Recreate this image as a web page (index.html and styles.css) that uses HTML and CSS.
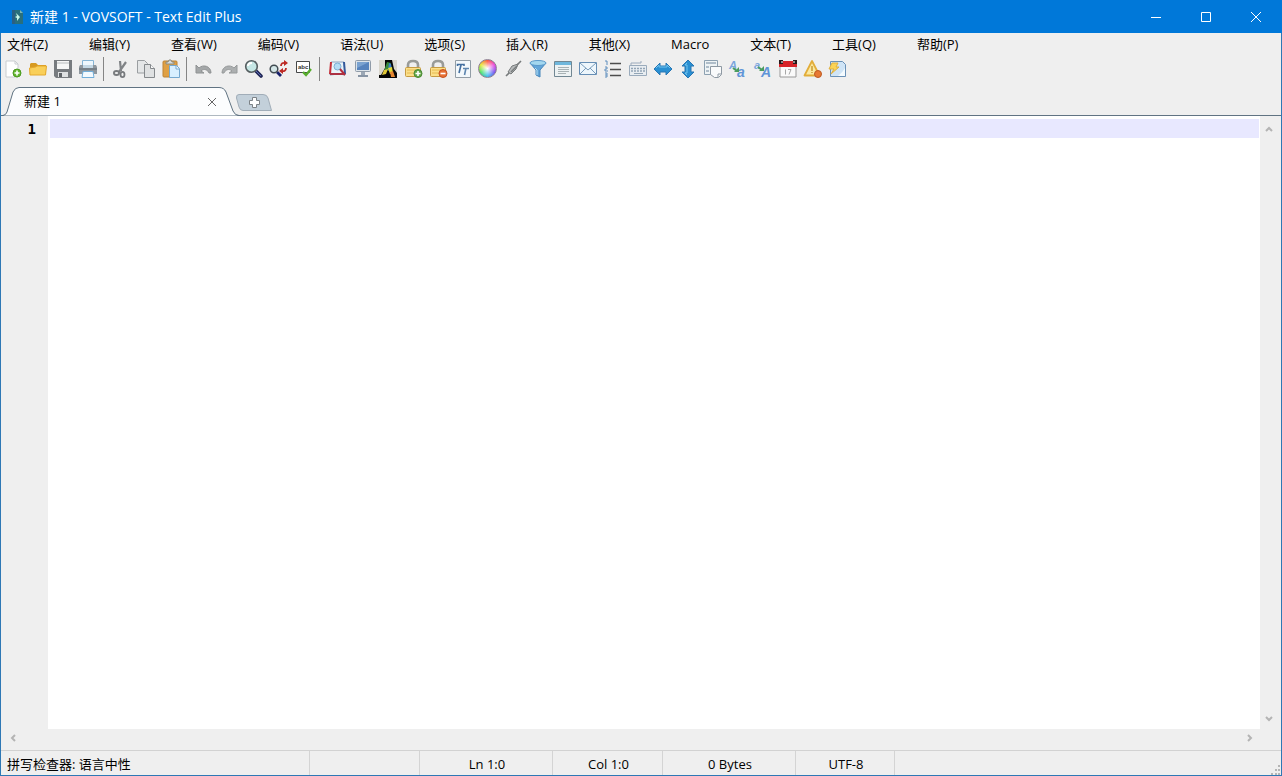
FILE: index.html
```html
<!DOCTYPE html>
<html lang="zh-CN">
<head>
<meta charset="utf-8">
<title>新建 1 - VOVSOFT - Text Edit Plus</title>
<link rel="stylesheet" href="styles.css">
</head>
<body>
<div class="window">
  <header class="titlebar">
    <svg class="app-icon" viewBox="0 0 12 16"><path d="M1 1h8l3 3v11H1z" fill="#286f7c"/><path d="M1 1h3v14H1z" fill="#2b5f83"/><path d="M9 1v3h3z" fill="#7bb7b4"/><path d="M5 4l4 4-3 4V9L4 8l2-1z" fill="#c9f5e6"/></svg>
    <h1 class="title">新建 1 - VOVSOFT - Text Edit Plus</h1>
    <div class="window-controls">
      <button class="win-btn" aria-label="最小化"><svg viewBox="0 0 12 12"><path d="M1 6.500h10"/></svg></button>
      <button class="win-btn" aria-label="最大化"><svg viewBox="0 0 12 12"><path d="M1.500 1.500h9v9h-9z"/></svg></button>
      <button class="win-btn" aria-label="关闭"><svg viewBox="0 0 12 12"><path d="M1 1l10 10M11 1L1 11"/></svg></button>
    </div>
  </header>

  <nav class="menubar">
    <button>文件(Z)</button><button>编辑(Y)</button><button>查看(W)</button><button>编码(V)</button><button>语法(U)</button><button>选项(S)</button><button>插入(R)</button><button>其他(X)</button><button>Macro</button><button>文本(T)</button><button>工具(Q)</button><button>帮助(P)</button>
  </nav>

  <div class="toolbar" role="toolbar">
    <button aria-label="新建"><svg viewBox="0 0 20 20"><path d="M3 2h9l3 3v13H3z" fill="#fff" stroke="#c9cdd0"/><path d="M12 2v3h3" fill="none" stroke="#c9cdd0"/><circle cx="14" cy="14" r="4" fill="#62b52d" stroke="#4c9b20"/><path d="M14 11.500v5M11.500 14h5" stroke="#fff" stroke-width="1.600"/></svg></button>
    <button aria-label="打开"><svg viewBox="0 0 20 20"><path d="M2 16V5l1-1h5l2 2h8v10z" fill="#d79a20"/><path d="M1.500 9l6-1 2-1h9l-1 9H2z" fill="#f9cf59" stroke="#e4a92e"/></svg></button>
    <button aria-label="保存"><svg viewBox="0 0 20 20"><path d="M1 1h18v18H3l-2-2z" fill="#777b7f"/><path d="M4 2h12v8H4z" fill="#f5f6f6"/><path d="M4 4h12" stroke="#b8bcbe"/><path d="M5 13h10v5H5z" fill="#dfe1e2"/><path d="M6 14h3v4H6z" fill="#606468"/></svg></button>
    <button aria-label="打印"><svg viewBox="0 0 20 20"><path d="M4.500 1.500h11V8h-11z" fill="#eef7fd" stroke="#86b5d5"/><path d="M2 6h16l1 2v7H1V8z" fill="#8f979e"/><path d="M5 6h10v3H5z" fill="#c4d8e5"/><path d="M1 10h18" stroke="#5f6870"/><path d="M5 12.500h10l1 6H4z" fill="#f3faff" stroke="#72aed9"/></svg></button>
    <span class="separator"></span>
    <button aria-label="剪切"><svg viewBox="0 0 20 20"><path d="M9 2l1 10M15 3l-7 10" stroke="#808386" stroke-width="2.200"/><ellipse cx="5.500" cy="14" rx="2.600" ry="2" fill="none" stroke="#777a7d" stroke-width="1.800"/><ellipse cx="11.500" cy="15.500" rx="2" ry="2.600" fill="none" stroke="#777a7d" stroke-width="1.800"/></svg></button>
    <button aria-label="复制"><svg viewBox="0 0 20 20"><path d="M1.500 1.500h7l3 3V14h-10z" fill="#e4e6e7" stroke="#9a9ea1"/><path d="M8.500 5.500h6l4 4v9h-10z" fill="#dfe1e2" stroke="#85898c"/><path d="M14.500 5.500v4h4" fill="#f8f8f8" stroke="#85898c"/></svg></button>
    <button aria-label="粘贴"><svg viewBox="0 0 20 20"><rect x="2" y="2" width="14" height="16" rx="1" fill="#dfa044" stroke="#bd8334"/><path d="M5 5V3h2l1-2h2l1 2h2v2z" fill="#d8dbd9" stroke="#8d8979"/><path d="M8.500 6.500h7l3 3v9h-10z" fill="#d8efff" stroke="#75a8cf"/><path d="M15 7v3h3" fill="#fff" stroke="#75a8cf"/></svg></button>
    <span class="separator"></span>
    <button aria-label="撤销"><svg viewBox="0 0 20 20"><path d="M2 6v8h8l-3-2c3-3 7-1 8 2h2C17 7 9 5 5 9z" fill="#a4a7a8" stroke="#8f9293"/></svg></button>
    <button aria-label="重做"><svg viewBox="0 0 20 20"><path d="M18 6v8h-8l3-2c-3-3-7-1-8 2H3C3 7 11 5 15 9z" fill="#acafb0" stroke="#979a9b"/></svg></button>
    <button aria-label="查找"><svg viewBox="0 0 20 20"><path d="M12 12l5 5" stroke="#222858" stroke-width="3.600" stroke-linecap="round"/><path d="M12 12l5 5" stroke="#5b6db4"/><circle cx="7.500" cy="7.500" r="5.800" fill="#c6e7e5" stroke="#555e60" stroke-width="1.600"/><path d="M4 7q0-3 4-3" fill="none" stroke="#fff" stroke-width="2"/></svg></button>
    <button aria-label="替换"><svg viewBox="0 0 20 20"><path d="M8 13l4 4" stroke="#18206b" stroke-width="2.800"/><circle cx="5" cy="10" r="3.800" fill="#d4e6e7" stroke="#414b51" stroke-width="1.500"/><path d="M12 7q0-4 5-3M17 9q0 4-5 3" fill="none" stroke="#bd2924" stroke-width="1.800"/><path d="M15 1l4 3-4 3zM14 9l-4 3 4 3z" fill="#bd2924"/></svg></button>
    <button aria-label="拼写检查"><svg viewBox="0 0 20 20"><path d="M2.500 2.500h13v11h-13z" fill="#fff" stroke="#454748"/><text x="4" y="10" class="glyph-abc">abc</text><path d="M9 13l3 3 5-6" fill="none" stroke="#56ad2d" stroke-width="2.400"/></svg></button>
    <span class="separator wide"></span>
    <button aria-label="预览"><svg viewBox="0 0 20 20"><path d="M3 3h13l1 13-6-1-9 1z" fill="#e9f3f8" stroke="#8aa2c2"/><path d="M3 3L2 15" stroke="#c72e37" stroke-width="2"/><path d="M2 15h14" stroke="#ac3142" stroke-width="2"/><path d="M16 3l1 12" stroke="#33599b" stroke-width="2"/><circle cx="9.500" cy="7.500" r="3.500" fill="#b4dcf5" stroke="#7caed3"/><path d="M12 10l5 6" stroke="#b42e3d" stroke-width="2"/></svg></button>
    <button aria-label="全屏"><svg viewBox="0 0 20 20"><rect x="2.500" y="1.500" width="15" height="11" rx="1" fill="#dce3e9" stroke="#8f9ba8"/><path d="M4 3h12v8H4z" fill="#5683bd"/><path d="M4 3h12L4 9z" fill="#7aa2d0"/><path d="M8 13h4v3H8z" fill="#9ba7b5"/><path d="M5 17h10" stroke="#8794a4" stroke-width="2"/></svg></button>
    <button aria-label="语法颜色"><svg viewBox="0 0 20 20"><path d="M1 1h18v18H1z" fill="#050505"/><path d="M1 1h6v8l-4 7H1z" fill="#d9d6cc"/><path d="M14 1h5v13l-3-4z" fill="#d9d6cc"/><path d="M9 3l4 1-3 7-4 1z" fill="#37893a"/><path d="M11 4l2 1 1 5-4 2z" fill="#3d80c8"/><path d="M10 9l4-1 1 6-3 1z" fill="#e2da36"/><path d="M12 13l3-1 2 6h-4z" fill="#e58631"/><path d="M6 11l4-1-2 5-4 1z" fill="#e2c936"/></svg></button>
    <button aria-label="加密"><svg viewBox="0 0 20 20"><path d="M5 9V6q0-4 5-4t5 4v3" fill="none" stroke="#999b98" stroke-width="2.600"/><rect x="2.500" y="8.500" width="15" height="9" rx="1" fill="#fbdf89" stroke="#c69b42"/><path d="M4 11h9M4 14h7" stroke="#e6b94f"/><circle cx="15" cy="14.500" r="4" fill="#62a846" stroke="#498733"/><path d="M12.500 14.500h5M15 12v5" stroke="#fff" stroke-width="1.600"/></svg></button>
    <button aria-label="解密"><svg viewBox="0 0 20 20"><path d="M5 9V6q0-4 5-4t5 4v3" fill="none" stroke="#999b98" stroke-width="2.600"/><rect x="2.500" y="8.500" width="15" height="9" rx="1" fill="#fbdf89" stroke="#c69b42"/><path d="M4 11h9M4 14h7" stroke="#e6b94f"/><circle cx="15" cy="14.500" r="4" fill="#e77034" stroke="#c65221"/><path d="M12.500 14.500h5" stroke="#fff" stroke-width="1.600"/></svg></button>
    <button aria-label="字体"><svg viewBox="0 0 20 20"><path d="M2.500 1.500h15v17h-15z" fill="#f3f8fb" stroke="#929da6"/><path d="M4.500 7V5.500H11V7M8 6l-2 8" fill="none" stroke="#426e9f" stroke-width="1.600"/><path d="M10 9.500h6M13 9l-1.500 7" fill="none" stroke="#5f87b0" stroke-width="1.600"/></svg></button>
    <button aria-label="颜色"><span class="color-wheel"></span></button>
    <button aria-label="连接"><svg viewBox="0 0 20 20"><path d="M3 17l4-4M13 7l5-5" stroke="#777b7c" stroke-width="1.600"/><path d="M5 13l4-6 6-2-2 5-5 5z" fill="#b7babb" stroke="#777b7c"/><path d="M8 13l6-6" stroke="#777b7c" stroke-width="1.500"/></svg></button>
    <button aria-label="筛选"><svg viewBox="0 0 20 20"><path d="M2 4h16l-6 7v7l-4-2v-5z" fill="#62a5d9" stroke="#4685ba"/><ellipse cx="10" cy="4" rx="8" ry="2.500" fill="#a3d7ef" stroke="#5a99ca"/><path d="M7 9l2 2v5" fill="none" stroke="#b7e2f5"/></svg></button>
    <button aria-label="窗口"><svg viewBox="0 0 20 20"><path d="M1.500 2.500h17v15h-17z" fill="#edf2f3" stroke="#718793"/><path d="M2 3h16v3H2z" fill="#6fb7dc"/><path d="M5 8.500h11M5 10.500h11M5 12.500h11M5 14.500h8" stroke="#a8b2b5"/></svg></button>
    <button aria-label="邮件"><svg viewBox="0 0 20 20"><path d="M1.500 3.500h17v12h-17z" fill="#edf6fc" stroke="#668eb5"/><path d="M2 4l8 7 8-7M2 15l6-6M18 15l-6-6" fill="none" stroke="#789bbb"/></svg></button>
    <button aria-label="行号"><svg viewBox="0 0 20 20"><path d="M7 4.500h11M7 10.500h11M7 16.500h11" stroke="#4d4d4d" stroke-width="1.500"/><path d="M2 2h2v4M2 8h2v2H2v2h3M2 14h2v2H2m2 0v2H2" fill="none" stroke="#5d8dbd"/></svg></button>
    <button aria-label="键盘"><svg viewBox="0 0 20 20"><path d="M3 6V4h10V2" fill="none" stroke="#9baabc"/><path d="M1.500 6.500h17v10h-17z" fill="#e8edf1" stroke="#9aabbc"/><path d="M3 9.500h14M3 12h14" stroke="#92a5b6" stroke-width="1.500" stroke-dasharray="2 1"/><path d="M6 14.500h9" stroke="#92a5b6"/></svg></button>
    <button aria-label="水平翻转"><svg viewBox="0 0 20 20"><path d="M1 10l6-6v3h6V4l6 6-6 6v-3H7v3z" fill="#298fd2" stroke="#2876b3"/><path d="M3 9l3-3v2h8V6l3 3" fill="none" stroke="#70c3ed"/></svg></button>
    <button aria-label="垂直翻转"><svg viewBox="0 0 20 20"><path d="M10 1l6 6h-3v6h3l-6 6-6-6h3V7H4z" fill="#298fd2" stroke="#2876b3"/><path d="M9 4L7 6h2v8H7l2 2" fill="none" stroke="#70c3ed"/></svg></button>
    <button aria-label="复制窗口"><svg viewBox="0 0 20 20"><path d="M1.500 1.500h13v14h-13z" fill="#eef3f5" stroke="#8da1b1"/><path d="M3 4h10M3 8h3M3 12h3" stroke="#9bacba" stroke-width="1.500"/><path d="M7.500 7.500h11v8l-3 3h-4l-4-3z" fill="#f9fafb" stroke="#8e99a3"/><path d="M15 18v-3h3" fill="none" stroke="#8e99a3"/></svg></button>
    <button aria-label="转为小写"><svg viewBox="0 0 20 20"><text x="1" y="10" class="glyph-small">A</text><text x="9" y="18" class="glyph-large">a</text><path d="M5 9l4 3" stroke="#4b9d60" stroke-width="2"/><path d="M11 8v5H6z" fill="#4b9d60"/></svg></button>
    <button aria-label="转为大写"><svg viewBox="0 0 20 20"><text x="1" y="10" class="glyph-small">a</text><text x="8" y="18" class="glyph-large">A</text><path d="M5 8l4 3" stroke="#4b9d60" stroke-width="2"/><path d="M11 7v5H6z" fill="#4b9d60"/></svg></button>
    <button aria-label="日期"><svg viewBox="0 0 20 20"><path d="M2 3h16v15H2z" fill="#fafafa" stroke="#999"/><path d="M1 2h18v6H1z" fill="#d62429"/><path d="M1 1h4v4H1zM15 1h4v4h-4z" fill="#27191a"/><path d="M4 2v2M16 2v2" stroke="#fff"/><path d="M7.500 10.500v5M10 10.500h3l-2 5" fill="none" stroke="#a7a7a7"/></svg></button>
    <button aria-label="警告"><svg viewBox="0 0 20 20"><path d="M9 2L1.500 16.500h15z" fill="#fce9a0" stroke="#e2ad39" stroke-width="1.800" stroke-linejoin="round"/><path d="M9 7v5M9 13v1" stroke="#c69a35" stroke-width="1.500"/><circle cx="15" cy="15" r="3.500" fill="#e87932" stroke="#bd5923"/></svg></button>
    <button aria-label="运行"><svg viewBox="0 0 20 20"><path d="M2.500 2.500h12l3 3v12h-15z" fill="#cfe4f6" stroke="#6a91b7"/><path d="M10 17q5-4 7-8v8z" fill="#f4fbff"/><path d="M4 4h6L8 8h3L3 15l3-5H1z" fill="#fbd455" stroke="#e0b03f"/></svg></button>
  </div>

  <div class="tabs">
    <div class="tab">
      <svg class="tab-shape" viewBox="0 0 236 29"><path d="M0 28.500Q3 28 4 25L10 5Q12 .5 16 .5H216Q221 .5 223 5L230 24Q232 28.500 236 28.500" fill="#fcfdfe" stroke="#607382"/></svg>
      <button class="tab-name">新建 1</button>
      <button class="tab-close" aria-label="关闭标签"><svg viewBox="0 0 10 10"><path d="M1 1l8 8M9 1L1 9" stroke="#666"/></svg></button>
    </div>
    <button class="tab-add" aria-label="新标签"><svg viewBox="0 0 36 18"><path d="M3 .5H27Q31 .5 32 4L35.500 16.500H7Q4 16.500 3 13L.5 4Q0 .5 3 .5z" fill="#c3d0da" stroke="#a1adb8"/><path d="M16.500 3.500h4v3h3v4h-3v3h-4v-3h-3v-4h3z" fill="#fff" stroke="#7c8287"/></svg></button>
  </div>

  <main class="editor">
    <div class="gutter">1</div>
    <textarea class="document" aria-label="文档" spellcheck="false"></textarea>
    <div class="scroll-y"><button aria-label="向上"><svg viewBox="0 0 10 10"><path d="M2 7l3-3 3 3"/></svg></button><button aria-label="向下"><svg viewBox="0 0 10 10"><path d="M2 3l3 3 3-3"/></svg></button></div>
    <div class="scroll-x"><button aria-label="向左"><svg viewBox="0 0 10 10"><path d="M7 2L4 5l3 3"/></svg></button><button aria-label="向右"><svg viewBox="0 0 10 10"><path d="M3 2l3 3-3 3"/></svg></button></div>
  </main>

  <footer class="statusbar">
    <span class="status-language">拼写检查器: 语言中性</span><span></span><span>Ln 1:0</span><span>Col 1:0</span><span>0 Bytes</span><span>UTF-8</span>
    <svg class="grip" viewBox="0 0 10 10"><path d="M7 0h2v2H7zM7 4h2v2H7zM7 8h2v2H7zM4 4h2v2H4zM4 8h2v2H4zM0 8h2v2H0z" fill="#b5b5b5"/></svg>
  </footer>
</div>
</body>
</html>
```
FILE: styles.css
```css
* { box-sizing: border-box; }

body {
  margin: 0;
  font: 13px/20px "Open Sans", "Noto Sans CJK SC", sans-serif;
  color: #000;
}

button {
  margin: 0;
  padding: 0;
  border: 0;
  background: none;
  font: inherit;
  color: inherit;
}

svg { display: block; }

.window {
  display: flex;
  flex-direction: column;
  height: 100vh;
  border: 1px solid #2e78b5;
  border-top: 0;
  background: #efefef;
}

.titlebar {
  display: flex;
  align-items: center;
  height: 33px;
  margin: 0 -1px;
  padding-left: 11px;
  background: #0078d9;
  color: #fff;
}

.app-icon { width: 12px; height: 16px; }

.title {
  flex: 1;
  margin: 0 0 0 7px;
  font-size: 14px;
  font-weight: 400;
}

.window-controls { display: flex; padding-right: 1px; }

.win-btn {
  display: grid;
  place-items: center;
  width: 50px;
  height: 33px;
}

.win-btn svg {
  width: 12px;
  height: 12px;
  fill: none;
  stroke: #fff;
}

.menubar {
  display: flex;
  align-items: flex-start;
  gap: 41px;
  height: 23px;
  padding: 1px 0 0 6px;
}

.toolbar {
  display: flex;
  align-items: center;
  height: 27px;
  padding-bottom: 2px;
}

.toolbar button {
  display: grid;
  justify-content: start;
  align-items: center;
  width: 25px;
  height: 24px;
  padding-left: 2px;
}

.toolbar svg { width: 20px; height: 20px; fill: none; }

.separator {
  width: 8px;
  height: 24px;
  background: linear-gradient(#858585, #858585) 2px 0 / 1px 100% no-repeat;
}

.separator.wide { width: 9px; }

.glyph-abc { font: bold 6px "Liberation Sans", sans-serif; fill: #333; }
.glyph-small { font: italic bold 11px "Liberation Sans", sans-serif; fill: #7ba5dd; }
.glyph-large { font: italic bold 14px "Liberation Sans", sans-serif; fill: #6095d8; }

.color-wheel {
  width: 19px;
  height: 19px;
  border: 1px solid #8f7f92;
  border-radius: 50%;
  background: radial-gradient(#fff, #fff0 70%), conic-gradient(#ff4f35, #e940dc, #704ff0, #36bbed, #43df63, #e8e62e, #ff4f35);
}

.tabs {
  display: flex;
  align-items: flex-end;
  height: 33px;
  padding-left: 2px;
  background: linear-gradient(#607382, #607382) 0 100% / 100% 1px no-repeat;
}

.tab {
  display: grid;
  grid-template-columns: 1fr 32px;
  align-items: center;
  width: 236px;
  height: 29px;
}

.tab-shape {
  grid-area: 1 / 1 / 2 / 3;
  width: 236px;
  height: 29px;
}

.tab-name { grid-area: 1 / 1; padding: 0 0 2px 21px; text-align: left; }
.tab-close { grid-area: 1 / 2; width: 10px; height: 10px; }
.tab-add { width: 36px; height: 18px; margin: 0 0 4px -3px; }

.editor {
  display: grid;
  grid-template: 1fr 21px / 47px 1fr 21px;
  flex: 1;
  min-height: 0;
}

.gutter {
  padding: 3px 12px 0 0;
  font: bold 14px/20px "DejaVu Sans Mono", monospace;
  text-align: right;
}

.document {
  width: 100%;
  height: 100%;
  padding: 3px 2px;
  border: solid #fff;
  border-width: 0 1px 0 2px;
  outline: 0;
  resize: none;
  font: 14px/20px "DejaVu Sans Mono", monospace;
  background: linear-gradient(#e8e8ff, #e8e8ff) 0 3px / 100% 19px no-repeat #fff;
}

.scroll-y, .scroll-x { display: flex; justify-content: space-between; }
.scroll-y { flex-direction: column; align-items: center; padding: 8px 4px 5px 0; }
.scroll-x { grid-column: 1 / 3; align-items: center; padding: 0 5px 4px 7px; }
.scroll-y svg, .scroll-x svg { width: 10px; height: 10px; fill: none; stroke: #b4b4b4; stroke-width: 2; }

.statusbar {
  display: grid;
  grid-template-columns: 309px 110px 133px 110px 133px 99px 1fr;
  height: 25px;
  border-top: 1px solid #d2d2d2;
}

.statusbar span {
  padding: 3px 0 0 2px;
  border-right: 1px solid #d4d4d4;
  text-align: center;
}

.statusbar .status-language { padding-left: 6px; text-align: left; }
.grip { width: 10px; height: 10px; align-self: end; justify-self: end; }
```
